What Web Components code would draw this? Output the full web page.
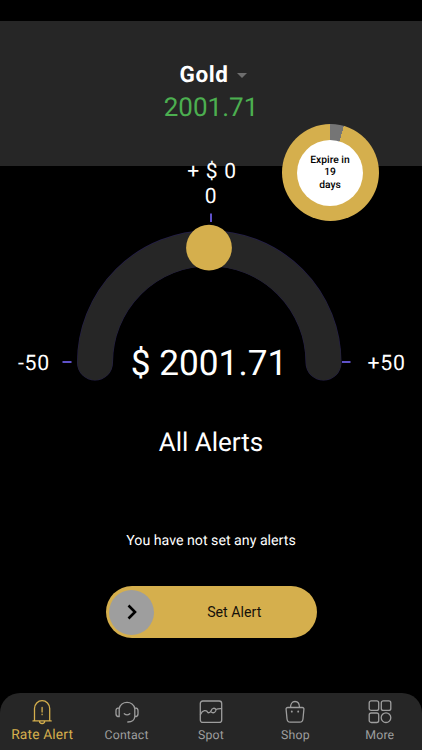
<!DOCTYPE html>
<html lang="en">
<head>
<meta charset="utf-8">
<meta name="viewport" content="width=device-width, initial-scale=1">
<title>Rate Alert</title>
<style>
  html, body { margin: 0; height: 100%; background: #000; }
  body { font-family: Roboto, "Liberation Sans", sans-serif; color: #fff; overflow: hidden;
    text-rendering: geometricPrecision; }
</style>
</head>
<body>
<rate-app>
  <metal-header slot="header" name="Gold" price="2001.71"></metal-header>
  <expire-ring slot="badge" used="16">Expire in<br>19<br>days</expire-ring>
  <rate-gauge min="-50" max="+50" offset="+ $ 0" value="0">$ 2001.71</rate-gauge>
  <alert-list heading="All Alerts">You have not set any alerts</alert-list>
  <slide-button>Set Alert</slide-button>
  <tab-bar slot="footer">
    <tab-item icon="bell" active>Rate Alert</tab-item>
    <tab-item icon="headset">Contact</tab-item>
    <tab-item icon="spot">Spot</tab-item>
    <tab-item icon="shop">Shop</tab-item>
    <tab-item icon="more">More</tab-item>
  </tab-bar>
</rate-app>

<script>
class BaseElement extends HTMLElement {
    constructor() {
        super();
        this.attachShadow({ mode: "open" });
    }
    connectedCallback() {
        this.shadowRoot.innerHTML = this.template();
    }
    attr(name) {
        return this.getAttribute(name) || "";
    }
}

class RateApp extends BaseElement {
    template() {
        return /*html*/`
<style>
    :host {
        --gold: #d5af4d;
        --panel: #262626;
        display: flex;
        flex-direction: column;
        box-sizing: border-box;
        height: 750px;
        padding-top: 21px;
        position: relative;
    }
    main { flex: 1; display: flex; flex-direction: column; align-items: center; position: relative; }
    /* the ring hangs over the edge of the header */
    .badge { position: absolute; top: 124px; right: 43.5px; }
</style>
<slot name="header"></slot>
<main><slot></slot></main>
<div class="badge"><slot name="badge"></slot></div>
<slot name="footer"></slot>`;
    }
}

class MetalHeader extends BaseElement {
    template() {
        return /*html*/`
<style>
    :host { display: flex; flex-direction: column; align-items: center; box-sizing: border-box;
        height: 145px; padding-top: 39px; background: var(--panel); }
    .name { display: flex; align-items: center; gap: 8px; margin-left: 4px;
        font-size: 22.5px; line-height: 30px; font-weight: 700; letter-spacing: 0.6px; }
    .name svg { display: block; }
    .price { font-size: 26px; line-height: 36px; color: #4caf50; }
</style>
<div class="name"><span>${this.attr("name")}</span>
    <svg width="10" height="5" viewBox="0 0 10 5"><path d="M0 0h10L5 5z" fill="#6e6e6e"/></svg></div>
<div class="price">${this.attr("price")}</div>`;
    }
}

class ExpireRing extends BaseElement {
    template() {
        return /*html*/`
<style>
    :host { display: grid; place-items: center; width: 97px; height: 97px; border-radius: 50%;
        background: conic-gradient(#757575 ${this.attr("used")}deg, var(--gold) 0); }
    div { display: grid; place-items: center; box-sizing: border-box; width: 66px; height: 66px; border-radius: 50%;
        background: #fff; color: #000; text-align: center;
        font-size: 10.3px; line-height: 12.2px; font-weight: 500; }
</style>
<div><span><slot></slot></span></div>`;
    }
}

class RateGauge extends BaseElement {
    template() {
        return /*html*/`
<style>
    :host { display: block; width: 422px; margin-top: -6px; }
    .top { text-align: center; font-size: 21px; line-height: 24.5px; letter-spacing: 0.7px; padding-left: 2px; }
    .top div:last-child { padding-right: 2px; }
    .dial { display: grid; height: 175px; margin-top: -1px; }
    .dial > * { grid-area: 1 / 1; }
    svg { display: block; }
    .labels { display: grid; grid-template-columns: 68px 1fr 68px; align-items: center;
        align-self: end; height: 50px; margin-bottom: -5px; }
    .side { font-size: 21.3px; letter-spacing: 0.7px; text-align: center; }
    .side:last-child { padding-right: 3px; }
    .price { font-size: 35.2px; text-align: center; padding-right: 4px; }
</style>
<div class="top"><div>${this.attr("offset")}</div><div>${this.attr("value")}</div></div>
<div class="dial">
    <svg width="422" height="175" viewBox="0 208 422 175" fill="none">
        <path d="M95 362.500a114 114 0 0 1 228.500 0" stroke="#251f4c" stroke-width="36" stroke-linecap="round"/>
        <path d="M95 362.700a114.250 114.250 0 0 1 228.500 0" stroke="#262626" stroke-width="35" stroke-linecap="round"/>
        <path d="M211 213.500v8.500M62.500 362h9M342 362h8.500" stroke="#5f51c9" stroke-width="2"/>
        <circle cx="209" cy="247.700" r="22.900" fill="#d5af4d"/>
    </svg>
    <div class="labels">
        <span class="side">${this.attr("min")}</span>
        <span class="price"><slot></slot></span>
        <span class="side">${this.attr("max")}</span>
    </div>
</div>`;
    }
}

class AlertList extends BaseElement {
    template() {
        return /*html*/`
<style>
    :host { display: block; text-align: center; margin-top: 43px; }
    h2 { margin: 0; font-size: 26px; line-height: 34px; font-weight: 400; }
    p { margin: 71px 0 0; font-size: 14.2px; line-height: 20px; }
</style>
<h2>${this.attr("heading")}</h2>
<p><slot></slot></p>`;
    }
}

class SlideButton extends BaseElement {
    template() {
        return /*html*/`
<style>
    :host { display: block; margin-top: 35px; }
    button { display: flex; align-items: center; box-sizing: border-box; width: 211px; height: 52px;
        border: 0; border-radius: 26px; padding: 0 2px 0 3.5px; background: var(--gold);
        font: inherit; font-size: 14.2px; color: #15110a; }
    .knob { display: grid; place-items: center; width: 45px; height: 45px; border-radius: 50%; background: #9e9e9e; }
    .label { flex: 1; text-align: center; }
</style>
<button>
    <span class="knob"><svg width="24" height="24" viewBox="0 0 24 24" fill="none">
        <path d="M8.500 5.500l6.500 6.500-6.500 6.500" stroke="#000" stroke-width="2.600"/></svg></span>
    <span class="label"><slot></slot></span>
</button>`;
    }
}

class TabBar extends BaseElement {
    template() {
        return /*html*/`
<style>
    :host { display: grid; grid-template-columns: repeat(5, 1fr); height: 57px;
        background: var(--panel); border-radius: 20px 20px 0 0; }
</style>
<slot></slot>`;
    }
}

const icons = {
    bell: `<path d="M5.500 21.700V9.500a7.600 7.800 0 0 1 15.200 0v12.200M4 21.900h18.200M10.500 22a2.600 2.500 0 0 0 5.200 0M13.100 8.500v4.500M13.100 15.200v.5"/>`,
    headset: `<path d="M5.200 17.500V9.500a8 7.800 0 0 1 15.600 0v8c-.3 3.500-2.800 5.500-7 5.500M5.200 8.800c-2 0-3.200 1-3.200 2.700v3.500c0 1.700 1.200 2.700 3.200 2.700M20.800 8.800c2 0 3.200 1 3.200 2.700v3.500c0 1.700-1.200 2.700-3.200 2.700M10.300 14.700c1.500 1.300 4 1.300 5.500 0"/>`,
    spot: `<rect x="2.300" y="2" width="21.400" height="21.400" rx="2.500"/><path d="M2.500 15.500c2-4.500 6-5 7.500-1.800 1.500.3 2.500-.5 3.300-2.200.3-2.500 3.700-3 4.600-1 .5 2.500-2.400 4-4.300 2.700M18 10.500c1.500-.8 3.500-.9 5.500-.8"/>`,
    shop: `<path d="M5.700 8.500h14.600c1 0 1.700.7 1.600 1.700l-.9 9.500c-.2 2.200-1.300 3.500-3.300 3.500H8.300c-2 0-3.100-1.300-3.300-3.500l-.9-9.500c-.1-1 .6-1.700 1.600-1.700zM8.500 8.500c0-3.300 1.500-6 4.500-6s4.500 2.700 4.500 6"/><path d="M9.800 12.300v.4M16.200 12.300v.4" stroke-width="1.800"/>`,
    more: `<rect x="2.200" y="1.900" width="9.500" height="9.500" rx="2"/><rect x="14.300" y="1.900" width="9.500" height="9.500" rx="2"/><rect x="2.200" y="14" width="9.500" height="9.500" rx="2"/><circle cx="19" cy="18.700" r="4.800"/>`
};

class TabItem extends BaseElement {
    template() {
        return /*html*/`
<style>
    :host { display: flex; flex-direction: column; align-items: center; padding-top: 6px;
        color: #9e9e9e; font-size: 12.3px; white-space: nowrap; }
    :host([active]) { color: var(--gold); font-size: 13.8px; }
    svg { display: block; }
    span { line-height: 22px; letter-spacing: 0.15px; }
    :host([active]) span { line-height: 20px; }
</style>
<svg width="26" height="26" viewBox="0 0 26 26" fill="none" stroke="currentColor" stroke-width="1.300" stroke-linecap="round">${icons[this.attr("icon")]}</svg>
<span><slot></slot></span>`;
    }
}

customElements.define("rate-app", RateApp);
customElements.define("metal-header", MetalHeader);
customElements.define("expire-ring", ExpireRing);
customElements.define("rate-gauge", RateGauge);
customElements.define("alert-list", AlertList);
customElements.define("slide-button", SlideButton);
customElements.define("tab-bar", TabBar);
customElements.define("tab-item", TabItem);
</script>
</body>
</html>
